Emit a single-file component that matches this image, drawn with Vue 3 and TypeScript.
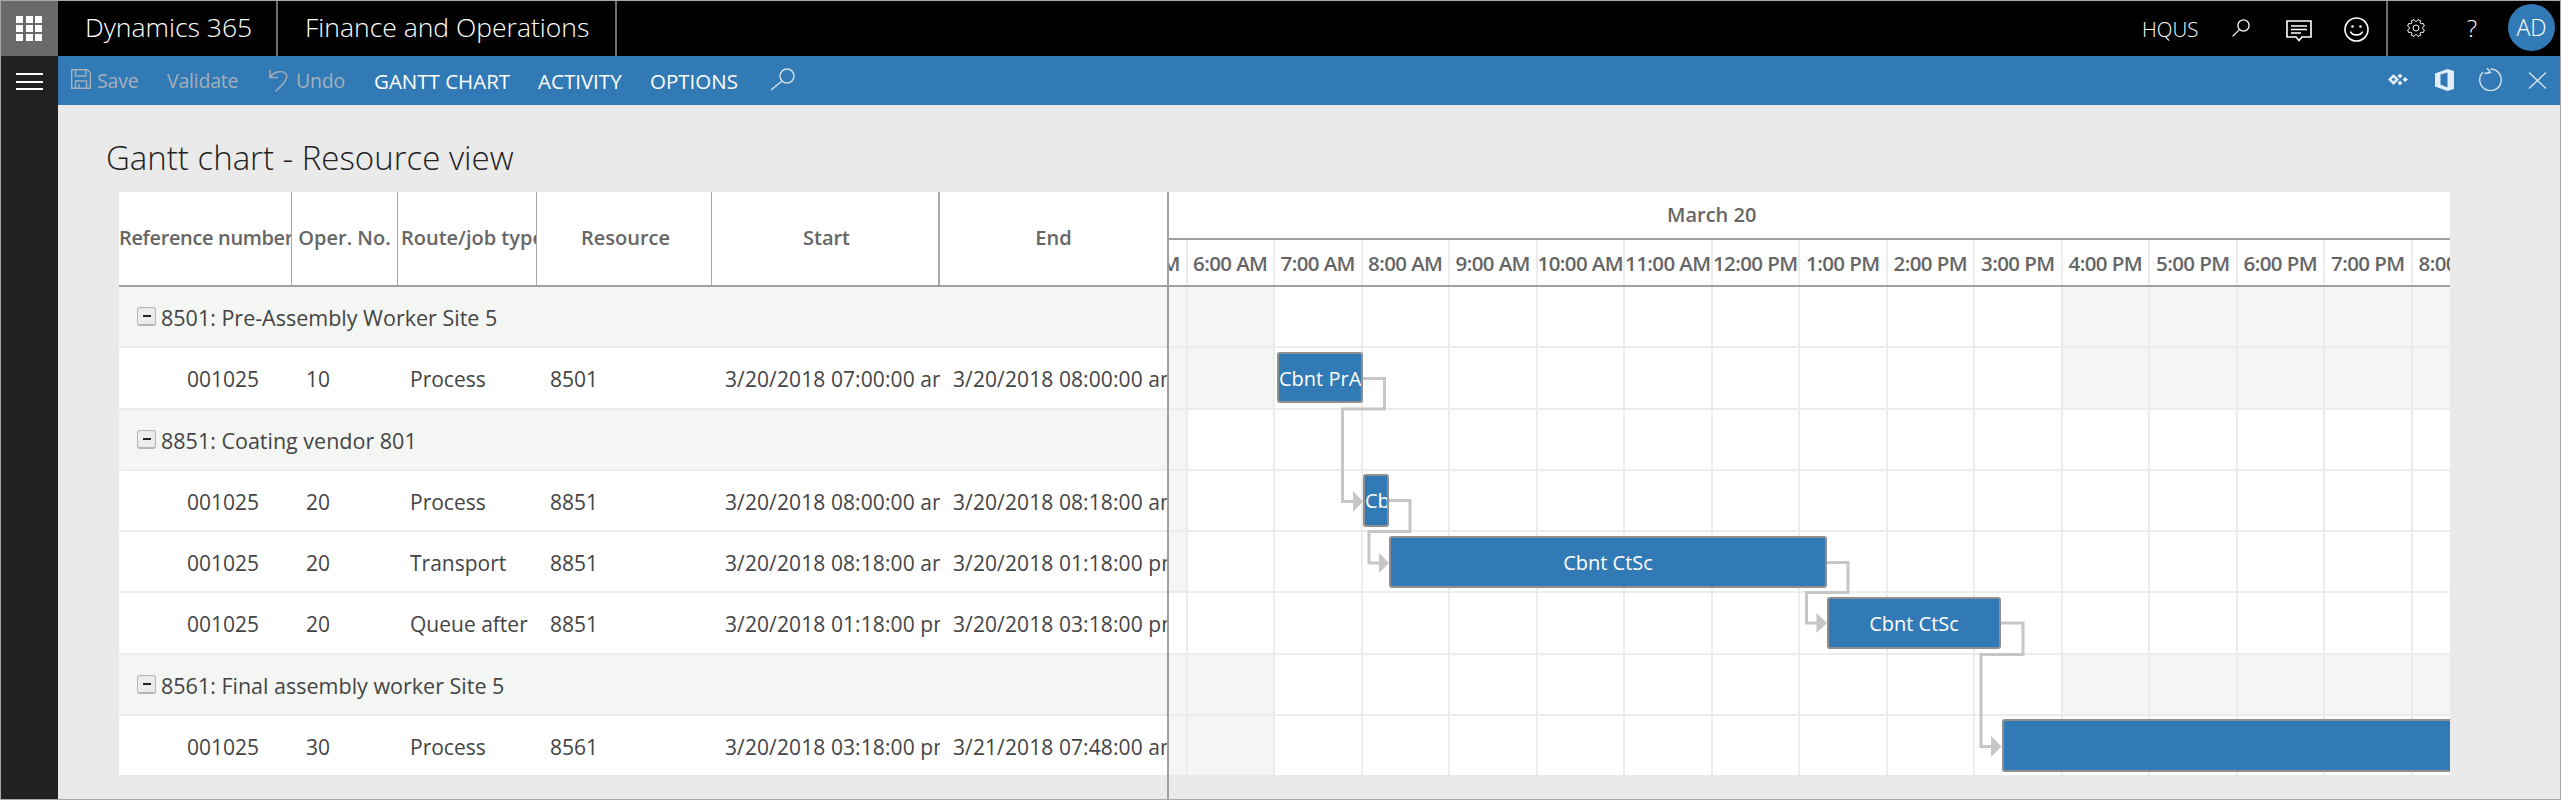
<script setup lang="ts">
import { computed } from 'vue';

type Row = { group?: string; cells?: string[]; shaded: number[] };

const columns = [
  { label: 'Reference number', cls: 'col-ref' },
  { label: 'Oper. No.', cls: 'col-op' },
  { label: 'Route/job type', cls: 'col-route' },
  { label: 'Resource', cls: 'col-res' },
  { label: 'Start', cls: 'col-start' },
  { label: 'End', cls: 'col-end' },
];
const cellClasses = ['col-ref', 'col-op', 'col-route', 'col-res', 'col-start', 'col-end'];

const hours = [
  '5:00 AM', '6:00 AM', '7:00 AM', '8:00 AM', '9:00 AM', '10:00 AM', '11:00 AM', '12:00 PM',
  '1:00 PM', '2:00 PM', '3:00 PM', '4:00 PM', '5:00 PM', '6:00 PM', '7:00 PM', '8:00 PM',
];

const offHours = [0, 1, 11, 12, 13, 14, 15];
const rows: Row[] = [
  { group: '8501: Pre-Assembly Worker Site 5', shaded: offHours },
  { cells: ['001025', '10', 'Process', '8501', '3/20/2018 07:00:00 am', '3/20/2018 08:00:00 am'], shaded: offHours },
  { group: '8851: Coating vendor 801', shaded: [0] },
  { cells: ['001025', '20', 'Process', '8851', '3/20/2018 08:00:00 am', '3/20/2018 08:18:00 am'], shaded: [0] },
  { cells: ['001025', '20', 'Transport', '8851', '3/20/2018 08:18:00 am', '3/20/2018 01:18:00 pm'], shaded: [0] },
  { cells: ['001025', '20', 'Queue after', '8851', '3/20/2018 01:18:00 pm', '3/20/2018 03:18:00 pm'], shaded: [] },
  { group: '8561: Final assembly worker Site 5', shaded: offHours },
  { cells: ['001025', '30', 'Process', '8561', '3/20/2018 03:18:00 pm', '3/21/2018 07:48:00 am'], shaded: [0, 1] },
];

// page coordinates of the gantt pane, the bars are measured from it
const paneX = 1169;
const paneY = 192;
const bars = [
  { text: 'Cbnt PrA', x: 1277, y: 352, w: 86, h: 51 },
  { text: 'Cbnt CtSc', x: 1363, y: 474, w: 26, h: 53 },
  { text: 'Cbnt CtSc', x: 1389, y: 536, w: 438, h: 52 },
  { text: 'Cbnt CtSc', x: 1827, y: 597, w: 174, h: 52 },
  { text: '', x: 2002, y: 719, w: 460, h: 53 },
];
const links = [
  { line: '1362,378.5 1384.5,378.5 1384.5,409 1342.5,409 1342.5,501.5 1354,501.5', arrow: '1353,491 1363,501.5 1353,512' },
  { line: '1388,500.5 1410,500.5 1410,531.5 1369,531.5 1369,563 1380,563', arrow: '1379,553 1389,563 1379,573' },
  { line: '1826,562.5 1848,562.5 1848,592.5 1806.5,592.5 1806.5,623 1817,623', arrow: '1816.5,613 1827,623 1816.5,633' },
  { line: '2000,623 2023,623 2023,654.5 1981,654.5 1981,746.5 1992,746.5', arrow: '1991,736 2001.5,746.5 1991,757' },
];

const barStyle = (b: { x: number; y: number; w: number; h: number }) => ({
  left: b.x - paneX + 'px',
  top: b.y - paneY + 'px',
  width: b.w + 'px',
  height: b.h + 'px',
});

// gear outline with eight teeth
const gearPath = computed(() => {
  const pts: string[] = [];
  for (let i = 0; i < 8; i++) {
    const a = (i * Math.PI) / 4 + Math.PI / 8;
    const step = [-0.3, -0.16, 0.16, 0.3];
    const radius = [6.6, 8.6, 8.6, 6.6];
    step.forEach((s, k) => {
      pts.push(`${(9 + radius[k] * Math.cos(a + s)).toFixed(2)},${(9 + radius[k] * Math.sin(a + s)).toFixed(2)}`);
    });
  }
  return 'M' + pts.join('L') + 'Z';
});
</script>

<template>
  <div class="shell">
    <header class="topbar">
      <div class="waffle"><i v-for="n in 9" :key="n"></i></div>
      <div class="brand brand-a">Dynamics 365</div>
      <div class="brand brand-b">Finance and Operations</div>
      <div class="top-right">
        <span class="company">HQUS</span>
        <svg class="t-search" width="18" height="18" viewBox="0 0 18 18" fill="none" stroke="#fff" stroke-width="1.3">
          <circle cx="11.5" cy="6.5" r="5.6" />
          <path d="M7.4 10.600 0.600 17.400" />
        </svg>
        <svg class="t-chat" width="26" height="22" viewBox="0 0 26 22" fill="none" stroke="#fff" stroke-width="1.6">
          <path d="M1 1H25V17H16L13 20.500 10 17H1Z" />
          <path d="M5 6H21M5 9.500H21M5 13H15" />
        </svg>
        <svg class="t-smile" width="25" height="25" viewBox="0 0 25 25" fill="none" stroke="#fff" stroke-width="1.6">
          <circle cx="12.500" cy="12.500" r="11.500" />
          <circle cx="8.500" cy="9.500" r="1.300" fill="#fff" stroke="none" />
          <circle cx="16.500" cy="9.500" r="1.300" fill="#fff" stroke="none" />
          <path d="M6.500 14.500C8 19 17 19 18.500 14.500" />
        </svg>
        <span class="top-sep"></span>
        <svg class="t-gear" width="18" height="18" viewBox="0 0 18 18" fill="none" stroke="#fff" stroke-width="1">
          <path :d="gearPath" />
          <circle cx="9" cy="9" r="3" />
        </svg>
        <span class="help">?</span>
        <span class="avatar">AD</span>
      </div>
    </header>

    <div class="body">
      <aside class="rail">
        <div class="burger"><i></i><i></i><i></i></div>
      </aside>

      <main class="main">
        <nav class="toolbar">
          <svg class="i-save" width="20" height="20" viewBox="0 0 20 20" fill="none" stroke="#a5b0ba" stroke-width="1.400">
            <path d="M0.700 0.700H16.500L19.300 3.500V19.300H0.700Z" />
            <path d="M4.500 0.700V7H15V0.700M4.500 19.300V12H15.500V19.300M8 15V19" />
          </svg>
          <span class="act dim a-save">Save</span>
          <span class="act dim a-validate">Validate</span>
          <svg class="i-undo" width="19" height="23" viewBox="0 0 19 23" fill="none" stroke="#a5b0ba" stroke-width="1.400">
            <path d="M1 1V8.500H9" />
            <path d="M1 8.500C5 2 15 0.500 17.500 6 19 11 13 16 6.500 22.500" />
          </svg>
          <span class="act dim a-undo">Undo</span>
          <span class="act a-gantt">GANTT CHART</span>
          <span class="act a-activity">ACTIVITY</span>
          <span class="act a-options">OPTIONS</span>
          <svg class="i-find" width="25" height="23" viewBox="0 0 25 23" fill="none" stroke="#d5e3ef" stroke-width="1.400">
            <circle cx="17" cy="8" r="7" />
            <path d="M12 13 1 22" />
          </svg>
          <div class="tool-right">
            <svg class="i-diamond" width="20" height="13" viewBox="0 0 20 13" fill="#e3edf5">
              <path d="M0 6.500 5.500 1 11 6.500 5.500 12ZM3.500 6.500 5.500 8.500 7.500 6.500 5.500 4.500Z" fill-rule="evenodd" />
              <path d="M9.500 3 12 0.500 14.500 3 12 5.500ZM9.500 10 12 7.500 14.500 10 12 12.500Z" />
              <path d="M14.500 6.500 17 4 20 6.500 17 9Z" />
            </svg>
            <svg class="i-office" width="19" height="22" viewBox="0 0 19 22" fill="#e3edf5">
              <path fill-rule="evenodd" d="M0 4.500 12.500 0 19 2V20L12.500 22 0 17.500ZM12.500 3.500 5.500 5.500V15.500L12.500 18.500Z" />
            </svg>
            <svg class="i-refresh" width="24" height="23" viewBox="0 0 24 23" fill="none" stroke="#d5e3ef" stroke-width="1.400">
              <path d="M11.500 1A10.800 10.800 0 1 1 4 4" />
              <path d="M8 0 11.500 4.500 5.500 5.500" />
            </svg>
            <svg class="i-close" width="19" height="17" viewBox="0 0 19 17" fill="none" stroke="#d5e3ef" stroke-width="1.400">
              <path d="M1 0.500 18 16.500M18 0.500 1 16.500" />
            </svg>
          </div>
        </nav>

        <h1 class="title">Gantt chart - Resource view</h1>

        <section class="sheet">
          <div class="grid-pane">
            <div class="grid-head">
              <div v-for="c in columns" :key="c.label" class="head-cell" :class="c.cls">{{ c.label }}</div>
            </div>
            <div v-for="(row, r) in rows" :key="r" class="grid-row" :class="{ 'is-group': row.group }">
              <template v-if="row.group">
                <span class="toggle"><i></i></span>
                <span class="group-name">{{ row.group }}</span>
              </template>
              <template v-else>
                <div v-for="(text, c) in row.cells" :key="c" class="cell" :class="cellClasses[c]">{{ text }}</div>
              </template>
            </div>
          </div>

          <div class="gantt-pane">
            <div class="date-row">March 20</div>
            <div class="hour-row">
              <div v-for="h in hours" :key="h" class="hour">{{ h }}</div>
            </div>
            <div v-for="(row, r) in rows" :key="r" class="lane">
              <div v-for="(h, i) in hours" :key="h" class="slot" :class="{ off: row.shaded.includes(i) }"></div>
            </div>

            <svg class="links" width="1281" height="583" viewBox="1169 192 1281 583">
              <g v-for="(l, i) in links" :key="i">
                <polyline :points="l.line" fill="none" stroke="#c6c6c6" stroke-width="3" />
                <polygon :points="l.arrow" fill="#c6c6c6" />
              </g>
            </svg>
            <div v-for="(b, i) in bars" :key="i" class="bar" :style="barStyle(b)">{{ b.text }}</div>
          </div>

          <div class="splitter"></div>
        </section>
      </main>
    </div>
  </div>
</template>

<style>
html,
body {
  margin: 0;
  background: #eaeaea;
}
</style>

<style scoped>
.shell {
  width: 2561px;
  height: 800px;
  box-sizing: border-box;
  border: 1px solid #a8a8a8;
  display: flex;
  flex-direction: column;
  overflow: hidden;
  background: #eaeaea;
  font-family: 'Open Sans', 'Noto Sans', sans-serif;
  color: #444;
}
.topbar {
  height: 55px;
  flex: none;
  background: #000;
  color: #fff;
  display: flex;
}
.waffle {
  width: 57px;
  box-sizing: border-box;
  padding: 15px 15px 14px;
  background: #6a6a6a;
  display: grid;
  grid-template-columns: repeat(3, 7px);
  grid-auto-rows: 7px;
  gap: 2px 2.500px;
  align-content: start;
}
.waffle i {
  background: #fff;
}
.brand {
  font-size: 26.500px;
  font-weight: 300;
  line-height: 53px;
  padding-left: 27px;
  border-right: 2px solid #6f6f6f;
  box-sizing: border-box;
  white-space: nowrap;
}
.brand-a {
  width: 220px;
}
.brand-b {
  width: 339px;
}
.top-right {
  margin-left: auto;
  display: flex;
  align-items: center;
  height: 100%;
  position: relative;
}
.company {
  font-size: 20.500px;
  font-weight: 300;
  width: 55px;
  margin-right: 35px;
  white-space: nowrap;
}
.t-search {
  margin-top: -2px;
  margin-right: 36px;
}
.t-chat {
  margin-top: 4px;
  margin-right: 32px;
}
.t-smile {
  margin-top: 2px;
  margin-right: 17px;
}
.top-sep {
  width: 2px;
  height: 100%;
  background: #6f6f6f;
  margin-right: 19px;
}
.t-gear {
  margin-top: -1px;
}
.help {
  width: 11px;
  margin-left: 42px;
  margin-right: 30px;
  font-size: 24px;
  font-weight: 300;
  line-height: 1;
  margin-top: -2px;
}
.avatar {
  width: 47px;
  height: 47px;
  border-radius: 50%;
  background: #317ab5;
  margin-right: 5px;
  margin-top: -2px;
  font-size: 23px;
  font-weight: 300;
  text-align: center;
  line-height: 47px;
}

.body {
  flex: 1;
  display: flex;
  min-height: 0;
}
.rail {
  width: 57px;
  flex: none;
  background: #212121;
}
.burger {
  padding: 17px 15px 0;
  display: flex;
  flex-direction: column;
  gap: 5.500px;
}
.burger i {
  height: 2px;
  background: #fff;
}
.main {
  flex: 1;
  min-width: 0;
}
.toolbar {
  height: 49px;
  background: #317ab5;
  color: #fff;
  display: flex;
  align-items: center;
  padding-left: 13px;
  padding-right: 13px;
  box-sizing: border-box;
}
.act {
  font-size: 20.500px;
  white-space: nowrap;
  line-height: 49px;
  margin-top: 2px;
}
.dim {
  color: #a5b0ba;
  font-size: 19.500px;
  letter-spacing: -0.200px;
  margin-top: -1px;
}
.i-save {
  margin-right: 6px;
  margin-top: -3px;
}
.a-save {
  width: 42px;
  margin-right: 28px;
}
.a-validate {
  width: 74px;
  margin-right: 28px;
}
.i-undo {
  margin-right: 8px;
  margin-top: -1px;
}
.a-undo {
  width: 49px;
  margin-right: 29px;
}
.a-gantt {
  width: 136px;
  margin-right: 28px;
}
.a-activity {
  width: 84px;
  margin-right: 28px;
}
.a-options {
  width: 87px;
  margin-right: 33px;
}
.i-find {
  margin-top: -3px;
}
.tool-right {
  margin-left: auto;
  display: flex;
  align-items: center;
}
.i-diamond {
  margin-right: 27px;
  margin-top: -2px;
}
.i-office {
  margin-right: 25px;
  margin-top: -2px;
}
.i-refresh {
  margin-right: 25px;
  margin-top: -2px;
}
.title {
  margin: 0;
  height: 87px;
  box-sizing: border-box;
  padding: 31px 0 0 48px;
  font-size: 33px;
  line-height: 44px;
  font-weight: 300;
  color: #222;
  white-space: nowrap;
}
.sheet {
  position: relative;
  margin-left: 61px;
  width: 2331px;
  height: 583px;
  display: flex;
  background: #fff;
}
.grid-pane {
  width: 1048px;
  flex: none;
  overflow: hidden;
}
.grid-head {
  height: 95px;
  display: flex;
  box-sizing: border-box;
  border-bottom: 2px solid #a0a0a0;
}
.head-cell {
  box-sizing: border-box;
  height: 100%;
  border-right: 1px solid #a9a9a9;
  font-size: 20px;
  font-weight: 600;
  color: #666;
  line-height: 92px;
  text-align: center;
  white-space: nowrap;
  overflow: hidden;
}
.col-ref {
  width: 173px;
}
.col-op {
  width: 106px;
}
.col-route {
  width: 139px;
}
.col-res {
  width: 175px;
}
.col-start {
  width: 228px;
}
.col-end {
  width: 227px;
}
.head-cell.col-ref {
  text-align: left;
  letter-spacing: -0.350px;
}
.head-cell.col-route {
  text-align: left;
  padding-left: 3px;
}
.head-cell.col-res,
.head-cell.col-start {
  padding-left: 3px;
}
.head-cell.col-start {
  border-right-width: 2px;
}
.head-cell.col-end {
  border-right: 0;
}
.grid-row {
  height: 61.250px;
  box-sizing: border-box;
  border-bottom: 2px solid #ececec;
  padding-top: 3px;
  display: flex;
  align-items: center;
  font-size: 21px;
  background: #fff;
}
.is-group {
  padding-top: 2px;
  background: #f4f6f4;
  font-size: 21.500px;
}
.toggle {
  width: 19px;
  height: 19px;
  box-sizing: border-box;
  margin-left: 18px;
  margin-right: 5px;
  margin-top: -2px;
  border: 1px solid #b5b5b5;
  border-bottom-width: 2px;
  border-radius: 3px;
  background: #ececec;
  display: flex;
  align-items: center;
  justify-content: center;
}
.toggle i {
  width: 8px;
  height: 2px;
  background: #222;
}
.group-name {
  white-space: nowrap;
}
.cell {
  box-sizing: border-box;
  padding-left: 13px;
  white-space: nowrap;
  overflow: hidden;
}
.cell.col-ref {
  padding-left: 68px;
}
.cell.col-op {
  padding-left: 14px;
}
.cell.col-route {
  padding-left: 12px;
}
.cell.col-start,
.cell.col-end {
  letter-spacing: 0.100px;
}
.gantt-pane {
  position: relative;
  flex: 1;
  min-width: 0;
  margin-left: 2px;
  overflow: hidden;
}
.date-row {
  height: 48px;
  box-sizing: border-box;
  border-bottom: 2px solid #a0a0a0;
  font-size: 20px;
  font-weight: 600;
  color: #666;
  line-height: 46px;
  padding-left: 498px;
  white-space: nowrap;
}
.hour-row {
  height: 47px;
  box-sizing: border-box;
  border-bottom: 2px solid #a0a0a0;
  display: flex;
  margin-left: -69px;
}
.hour {
  flex: none;
  width: 87.500px;
  box-sizing: border-box;
  border-right: 2px solid #ececec;
  font-size: 20.500px;
  font-weight: 600;
  color: #666;
  line-height: 46px;
  text-align: center;
  white-space: nowrap;
  letter-spacing: -0.600px;
}
.lane {
  height: 61.250px;
  box-sizing: border-box;
  border-bottom: 2px solid #ececec;
  display: flex;
  margin-left: -69px;
}
.slot {
  flex: none;
  width: 87.500px;
  box-sizing: border-box;
  border-right: 2px solid #ececec;
}
.off {
  background: #f4f6f4;
}
.links {
  position: absolute;
  left: 0;
  top: 0;
}
.bar {
  position: absolute;
  box-sizing: border-box;
  border: 2px solid #8f8f8f;
  border-radius: 3px;
  background: #317ab5;
  color: #fff;
  font-size: 20px;
  text-align: center;
  line-height: 50px;
  white-space: nowrap;
  overflow: hidden;
}
.splitter {
  position: absolute;
  left: 1048px;
  top: 0;
  width: 2px;
  height: 607px;
  background: #a0a0a0;
}
</style>
